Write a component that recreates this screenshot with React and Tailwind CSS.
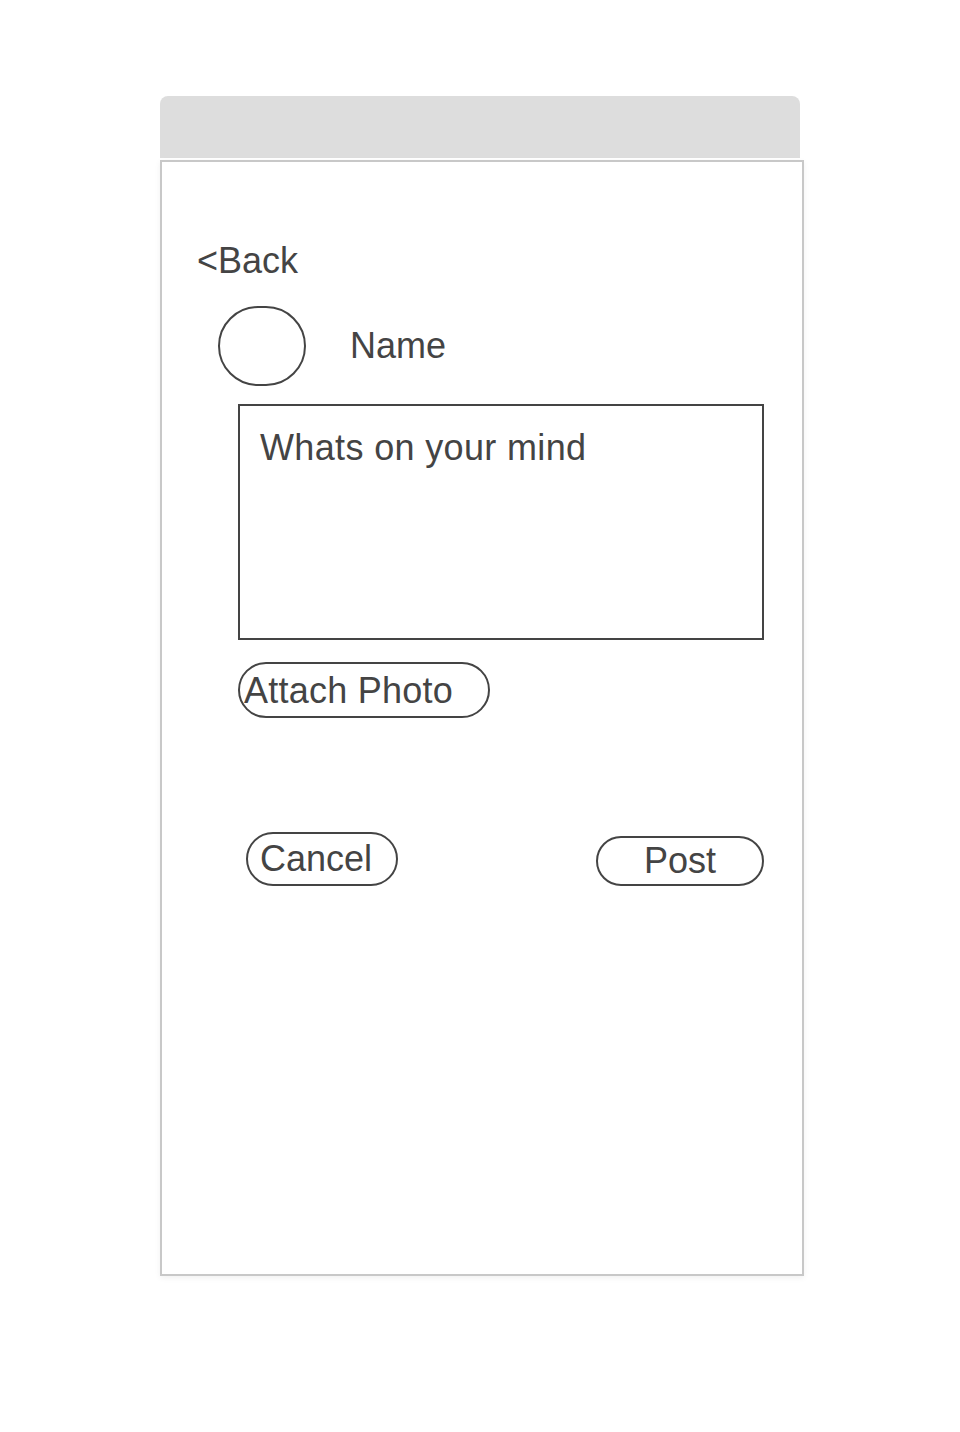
const FONT = { fontFamily: '"Liberation Sans", Arial, sans-serif' }

const CreatePostMockup = () => {
  return (
    <div className="min-h-[1432px] w-[960px] bg-white pt-24 pl-40 text-[#444444]" style={FONT}>
      <div className="h-[62px] w-[640px] rounded-t-lg bg-[#dddddd]" />
      <div className="mt-[2px] flex h-[1116px] w-[644px] flex-col border-2 border-[#c8c8c8] shadow-[0_2px_6px_rgba(0,0,0,0.06)]">
        <div className="ml-[35px] mt-[81px] text-[36px] leading-none">&lt;Back</div>

        <div className="ml-[56px] mt-[27px] flex items-center">
          <div className="h-[80px] w-[88px] rounded-full border-2 border-[#444444]" />
          <div className="ml-[44px] text-[36px] leading-none">Name</div>
        </div>

        <div className="ml-[76px] mt-[18px] h-[236px] w-[526px] border-2 border-[#444444] pl-[20px] pt-[24px]">
          <div className="text-[36px] leading-none tracking-[0.35px]">Whats on your mind</div>
        </div>

        <div className="ml-[76px] mt-[22px] flex h-[56px] w-[252px] items-center rounded-full border-2 border-[#444444] pl-[4px] pt-[2px]">
          <span className="text-[36px] leading-none tracking-[0.25px]">Attach Photo</span>
        </div>

        <div className="ml-[84px] mt-[114px] flex w-[518px] items-end justify-between">
          <div className="flex h-[54px] w-[152px] items-center rounded-full border-2 border-[#444444] pl-[12px]">
            <span className="text-[36px] leading-none">Cancel</span>
          </div>
          <div className="flex h-[50px] w-[168px] items-center justify-center rounded-full border-2 border-[#444444]">
            <span className="text-[36px] leading-none">Post</span>
          </div>
        </div>
      </div>
    </div>
  )
}

export default function App() {
  return <CreatePostMockup />
}
